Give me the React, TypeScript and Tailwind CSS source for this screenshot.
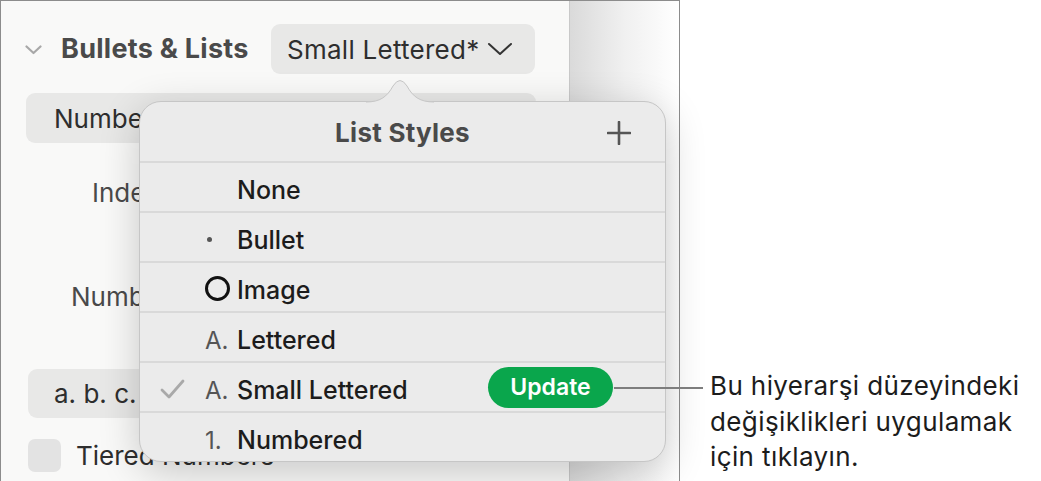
import React from 'react';

type Row = {
  label: string;
  marker?: 'dot' | 'circle' | 'A.' | '1.';
  checked?: boolean;
  update?: boolean;
};

const rows: Row[] = [
  { label: 'None' },
  { label: 'Bullet', marker: 'dot' },
  { label: 'Image', marker: 'circle' },
  { label: 'Lettered', marker: 'A.' },
  { label: 'Small Lettered', marker: 'A.', checked: true, update: true },
  { label: 'Numbered', marker: '1.' },
];

const Marker = ({ marker }: { marker?: Row['marker'] }) => {
  if (marker === 'dot') return <span className="ml-[2px] mt-[4px] block h-[5px] w-[5px] rounded-full bg-[#555]" />;
  if (marker === 'circle')
    return <span className="mt-[2px] block h-[25px] w-[25px] rounded-full border-[3.5px] border-[#111]" />;
  if (marker) return <span className="pt-[8px] text-[24px] font-normal text-[#555]">{marker}</span>;
  return null;
};

const Sidebar = () => (
  <div className="flex w-[569px] shrink-0 flex-col border-r border-[#c9c9c9] bg-[#f9f9f8] pl-[24px] pt-[23px] text-[#2e2e2e]">
    <div className="flex h-[50px] items-center">
      <svg width="17" height="10" viewBox="0 0 17 10" className="mt-[1px]">
        <path d="M1.5 1.5 L8.5 8 L15.5 1.5" fill="none" stroke="#a8a8a8" strokeWidth="2.2" strokeLinecap="round" strokeLinejoin="round" />
      </svg>
      <span className="ml-[19px] text-[27px] font-bold tracking-[0.01em] text-[#4a4a4a]">Bullets &amp; Lists</span>
      <div className="ml-auto mr-[34px] flex h-[50px] w-[264px] items-center rounded-[9px] bg-[#e8e8e7] pl-[16px] text-[26px]">
        <span className="tracking-[0.01em]">Small Lettered*</span>
        <svg width="26" height="14" viewBox="0 0 26 14" className="ml-[8px]">
          <path d="M2 2 L13 12 L24 2" fill="none" stroke="#333" strokeWidth="2" strokeLinecap="round" strokeLinejoin="round" />
        </svg>
      </div>
    </div>
    <div className="ml-[1px] mt-[19px] flex h-[50px] w-[510px] items-center rounded-[9px] bg-[#e8e8e7] pl-[28px] text-[26px]">
      Numbered
    </div>
    <div className="ml-[67px] mt-[34px] text-[26px] leading-[31px] text-[#4a4a4a]">Indent</div>
    <div className="ml-[46px] mt-[73px] text-[26px] leading-[31px] text-[#4a4a4a]">Number</div>
    <div className="ml-[3px] mt-[57px] flex h-[49px] w-[508px] items-center rounded-[9px] bg-[#e8e8e7] pl-[26px] text-[26px]">
      a. b. c.
    </div>
    <div className="ml-[3px] mt-[18px] flex items-center">
      <span className="h-[33px] w-[33px] rounded-[7px] bg-[#e3e3e3]" />
      <span className="ml-[15px] text-[26px]">Tiered Numbers</span>
    </div>
  </div>
);

const Popover = () => (
  <div className="absolute left-[139px] top-[101px] flex h-[361px] w-[527px] flex-col rounded-[22px] border border-[#c6c6c6] bg-[#ebebeb] shadow-[0_10px_40px_rgba(0,0,0,0.2)]">
    <div className="relative flex h-[61px] items-center justify-center border-b-2 border-[#d9d9d9]">
      <span className="pt-[2px] text-[26px] font-bold tracking-[0.01em] text-[#4a4a4a]">List Styles</span>
      <svg width="24" height="24" viewBox="0 0 24 24" className="absolute right-[34px] top-[19px]">
        <path d="M12 1 V23 M1 12 H23" stroke="#555" strokeWidth="2.6" strokeLinecap="round" />
      </svg>
    </div>
    {rows.map((row, i) => (
      <div
        key={row.label}
        className={`flex items-center ${i < rows.length - 1 ? 'h-[50px] border-b-2 border-[#d9d9d9]' : 'flex-1'}`}>
        <div className="flex w-[65px] shrink-0 items-center pl-[20px]">
          {row.checked && (
            <svg width="25" height="20" viewBox="0 0 25 20" className="mt-[3px]">
              <path d="M2 11 L9 18 L23 2" fill="none" stroke="#a9a9a9" strokeWidth="2.8" strokeLinecap="round" strokeLinejoin="round" />
            </svg>
          )}
        </div>
        <div className="flex w-[32px] shrink-0 items-center">
          <Marker marker={row.marker} />
        </div>
        <span className="pt-[8px] text-[25px] font-medium text-[#1c1c1c]">{row.label}</span>
        {row.update && (
          <div className="ml-auto mr-[52px] flex h-[41px] w-[125px] items-center justify-center rounded-full bg-[#0aa64c] text-[23px] font-semibold text-white">
            Update
          </div>
        )}
      </div>
    ))}
  </div>
);

const App = () => {
  return (
    <div className="relative flex h-[481px] w-[1041px] bg-white font-['Inter','Noto_Sans',sans-serif]">
      <div className="flex h-full w-[680px] shrink-0 border-l border-r border-t border-[#8c8c8c]">
        <Sidebar />
        <div className="flex-1 bg-gradient-to-r from-[#dadada] via-[#f0f0f0] to-white" />
      </div>
      <Popover />
      <svg width="68" height="26" viewBox="0 0 68 26" className="absolute left-[366px] top-[77px]">
        <path d="M0 25 C14 25 21 20 27 9 Q34 -2 41 9 C47 20 54 25 68 25" fill="#ebebeb" stroke="#c6c6c6" strokeWidth="1" />
      </svg>
      <div className="absolute left-[614px] top-[387px] h-[2px] w-[89px] bg-[#7d7d7d]" />
      <div className="pl-[30px] pt-[368px] text-[26px] leading-[35.5px] tracking-[0.015em] text-[#1c1c1c]">
        Bu hiyerarşi düzeyindeki
        <br />
        değişiklikleri uygulamak
        <br />
        için tıklayın.
      </div>
    </div>
  );
};

export default App;
